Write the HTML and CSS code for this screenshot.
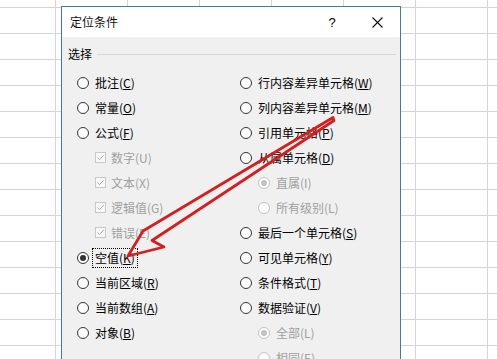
FILE: index.html
```html
<!DOCTYPE html>
<html lang="zh-CN">
<head>
<meta charset="utf-8">
<title>定位条件</title>
<link rel="stylesheet" href="styles.css">
</head>
<body>
<div class="sheet">
  <div class="dialog">
    <div class="titlebar">
      <span class="title">定位条件</span>
      <span class="cap help">?</span>
      <span class="cap close"><svg width="11" height="11" viewBox="0 0 11 11"><path d="M0.5 0.5 L10.5 10.5 M10.5 0.5 L0.5 10.5" stroke="#111" stroke-width="1.1" fill="none"/></svg></span>
    </div>
    <div class="body">
      <div class="group-head"><span>选择</span><span class="rule"></span></div>
      <div class="options">
        <div class="col">
          <div class="opt"><span class="radio"></span><span class="lbl">批注(<u>C</u>)</span></div>
          <div class="opt"><span class="radio"></span><span class="lbl">常量(<u>O</u>)</span></div>
          <div class="opt"><span class="radio"></span><span class="lbl">公式(<u>F</u>)</span></div>
          <div class="opt sub disabled"><span class="check"><svg width="11" height="11" viewBox="0 0 11 11"><path d="M1.8 5.6 L4.3 8.1 L9.4 2.6" stroke="#a9a9a9" stroke-width="1.2" fill="none"/></svg></span><span class="lbl">数字(U)</span></div>
          <div class="opt sub disabled"><span class="check"><svg width="11" height="11" viewBox="0 0 11 11"><path d="M1.8 5.6 L4.3 8.1 L9.4 2.6" stroke="#a9a9a9" stroke-width="1.2" fill="none"/></svg></span><span class="lbl">文本(X)</span></div>
          <div class="opt sub disabled"><span class="check"><svg width="11" height="11" viewBox="0 0 11 11"><path d="M1.8 5.6 L4.3 8.1 L9.4 2.6" stroke="#a9a9a9" stroke-width="1.2" fill="none"/></svg></span><span class="lbl">逻辑值(G)</span></div>
          <div class="opt sub disabled"><span class="check"><svg width="11" height="11" viewBox="0 0 11 11"><path d="M1.8 5.6 L4.3 8.1 L9.4 2.6" stroke="#a9a9a9" stroke-width="1.2" fill="none"/></svg></span><span class="lbl">错误(E)</span></div>
          <div class="opt"><span class="radio on"></span><span class="lbl focus">空值(<u>K</u>)</span></div>
          <div class="opt"><span class="radio"></span><span class="lbl">当前区域(<u>R</u>)</span></div>
          <div class="opt"><span class="radio"></span><span class="lbl">当前数组(<u>A</u>)</span></div>
          <div class="opt"><span class="radio"></span><span class="lbl">对象(<u>B</u>)</span></div>
        </div>
        <div class="col">
          <div class="opt"><span class="radio"></span><span class="lbl">行内容差异单元格(<u>W</u>)</span></div>
          <div class="opt"><span class="radio"></span><span class="lbl">列内容差异单元格(<u>M</u>)</span></div>
          <div class="opt"><span class="radio"></span><span class="lbl">引用单元格(<u>P</u>)</span></div>
          <div class="opt"><span class="radio"></span><span class="lbl">从属单元格(<u>D</u>)</span></div>
          <div class="opt sub disabled"><span class="radio on"></span><span class="lbl">直属(I)</span></div>
          <div class="opt sub disabled"><span class="radio"></span><span class="lbl">所有级别(L)</span></div>
          <div class="opt"><span class="radio"></span><span class="lbl">最后一个单元格(<u>S</u>)</span></div>
          <div class="opt"><span class="radio"></span><span class="lbl">可见单元格(<u>Y</u>)</span></div>
          <div class="opt"><span class="radio"></span><span class="lbl">条件格式(<u>T</u>)</span></div>
          <div class="opt"><span class="radio"></span><span class="lbl">数据验证(<u>V</u>)</span></div>
          <div class="opt sub disabled"><span class="radio on"></span><span class="lbl">全部(L)</span></div>
          <div class="opt sub disabled"><span class="radio"></span><span class="lbl">相同(E)</span></div>
        </div>
      </div>
    </div>
  </div>
  <svg class="arrow" width="497" height="359" viewBox="0 0 497 359">
    <path d="M333 117.5 L143 231 L128 256 L164 247 L152 240.5 L334 120.5 Z" fill="none" stroke="#d21f1f" stroke-width="2.8" stroke-linejoin="round"/>
  </svg>
</div>
</body>
</html>
```

FILE: styles.css
```css
html, body {
  margin: 0;
  padding: 0;
}

body {
  width: 497px;
  height: 359px;
  overflow: hidden;
  font-family: "Noto Sans CJK SC", "Noto Sans", sans-serif;
  font-size: 12px;
  color: #000;
}

.sheet {
  position: relative;
  width: 497px;
  height: 359px;
  background-color: #fff;
  background-image:
    linear-gradient(to right, #d4d4d4 0, #d4d4d4 1px, transparent 1px),
    linear-gradient(to bottom, #d4d4d4 0, #d4d4d4 1px, transparent 1px);
  background-size: 72px 26px, 72px 26px;
  background-position: 55px 5px, 0 7px;
  overflow: hidden;
}

.dialog {
  position: absolute;
  left: 61px;
  top: 6px;
  width: 338px;
  height: 400px;
  border: 1px solid #417e8f;
  background: #f0f0f0;
  display: flex;
  flex-direction: column;
}

.titlebar {
  height: 30px;
  background: #fff;
  display: flex;
  align-items: center;
  padding-left: 8px;
}

.title {
  flex: 1;
  line-height: 16px;
  color: #111;
}

.cap {
  width: 46px;
  height: 30px;
  display: flex;
  align-items: center;
  justify-content: center;
}

.help {
  font-family: "Liberation Sans", sans-serif;
  font-size: 13px;
  padding-left: 2px;
  box-sizing: border-box;
}

.body {
  padding: 9px 4px 0 6px;
}

.group-head {
  display: flex;
  align-items: center;
  line-height: 16px;
}

.rule {
  flex: 1;
  height: 0;
  border-top: 1px solid #d9d9d9;
  margin-left: 5px;
}

.options {
  margin-top: 8px;
  margin-left: 9px;
  display: grid;
  grid-template-columns: 163px 1fr;
}

.col {
  display: flex;
  flex-direction: column;
}

.opt {
  height: 25px;
  display: flex;
  align-items: center;
}

.opt.sub {
  padding-left: 18px;
}

.radio {
  width: 12px;
  height: 12px;
  box-sizing: border-box;
  border: 1px solid #333;
  border-radius: 50%;
  background: #fff;
  margin-right: 6px;
  display: flex;
  align-items: center;
  justify-content: center;
  flex: none;
}

.radio.on::after {
  content: "";
  width: 6px;
  height: 6px;
  border-radius: 50%;
  background: #333;
}

.check {
  width: 11px;
  height: 11px;
  box-sizing: border-box;
  border: 1px solid #c8c8c8;
  background: #f8f8f8;
  margin-right: 5px;
  display: flex;
  align-items: center;
  justify-content: center;
  flex: none;
}

.check svg {
  display: block;
}

.lbl {
  line-height: 16px;
  white-space: nowrap;
}

.lbl u {
  text-decoration: underline;
  text-underline-offset: 1px;
}

.lbl.focus {
  margin-left: -3px;
  padding: 1px 2px;
  border: 1px dotted #000;
}

.disabled .lbl {
  color: #a0a0a0;
}

.disabled .radio {
  border-color: #c2c2c2;
}

.disabled .radio.on::after {
  background: #c2c2c2;
}

.arrow {
  position: absolute;
  left: 0;
  top: 0;
  pointer-events: none;
}
```
